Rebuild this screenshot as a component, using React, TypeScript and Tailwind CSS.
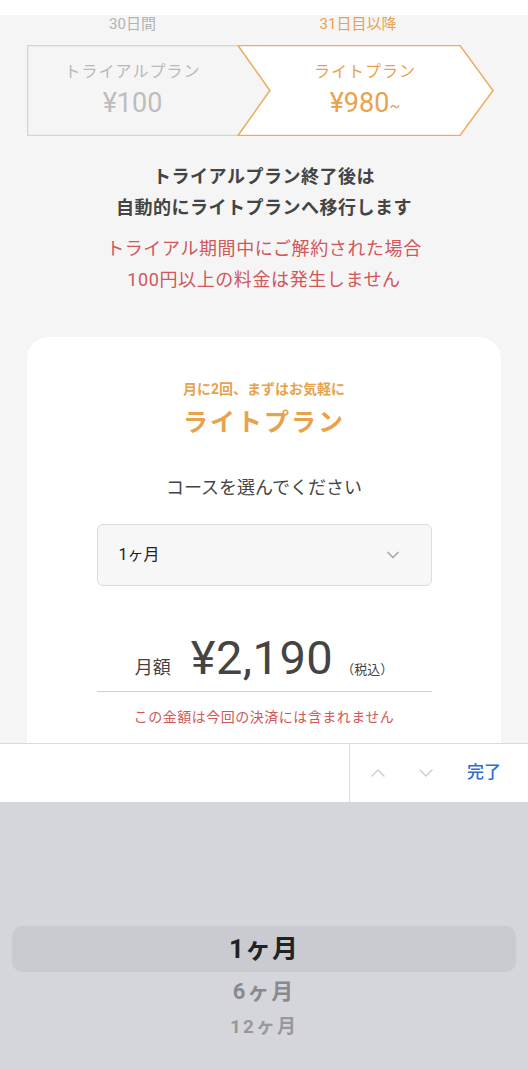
import { ChevronDown, ChevronUp } from "lucide-react";

const font = { fontFamily: '"Roboto", "Noto Sans CJK JP", sans-serif' };

export default function App() {
  return (
    <div className="w-[528px] h-[1069px] overflow-hidden bg-white flex flex-col" style={font}>
      <div className="h-[15px] bg-white shrink-0" />

      {/* page content */}
      <div className="h-[728px] bg-[#f5f5f5] overflow-hidden shrink-0 flex flex-col">
        <div className="flex h-[18px] mx-[27px] text-[15px] leading-[18px]">
          <div className="w-[211px] text-center text-[#b3b3b3]">30日間</div>
          <div className="w-[240px] text-center text-[#e9a24c]">31日目以降</div>
        </div>

        {/* plan arrows */}
        <div className="relative mx-[27px] mt-[12px] h-[91px] shrink-0 flex">
          <svg className="absolute inset-0" width="474" height="91" viewBox="0 0 474 91">
            <polygon points="0.5,0.5 211,0.5 243,45.5 211,90.5 0.5,90.5" fill="#f5f5f5" stroke="#d4d4d4" strokeWidth="1.5" />
            <polygon points="211,0.5 433,0.5 466,45.5 433,90.5 211,90.5 243,45.5" fill="#ffffff" stroke="#ecad62" strokeWidth="1.5" />
          </svg>
          <div className="relative w-[211px] flex flex-col items-center pt-[16px]">
            <div className="text-[16px] leading-[22px] text-[#b8b8b8] tracking-[1px]">トライアルプラン</div>
            <div className="mt-[5px] text-[27px] leading-[30px] text-[#bdbdbd]">¥100</div>
          </div>
          <div className="relative ml-[32px] w-[190px] flex flex-col items-center pt-[16px]">
            <div className="text-[16px] leading-[22px] text-[#e9a24c] tracking-[1px]">ライトプラン</div>
            <div className="mt-[5px] text-[27px] leading-[30px] text-[#e9a24c]">
              ¥980<span className="text-[16px]">~</span>
            </div>
          </div>
        </div>

        <div className="mt-[25px] text-center text-[18px] leading-[31px] font-bold text-[#444] tracking-[0.5px]">
          <div>トライアルプラン終了後は</div>
          <div>自動的にライトプランへ移行します</div>
        </div>
        <div className="mt-[10px] text-center text-[18px] leading-[31px] text-[#d2565a] tracking-[0.6px]">
          <div>トライアル期間中にご解約された場合</div>
          <div>100円以上の料金は発生しません</div>
        </div>

        {/* card */}
        <div className="mt-[42px] mx-[27px] h-[460px] shrink-0 bg-white rounded-[22px] flex flex-col items-center pt-[42px]">
          <div className="text-[14px] leading-[20px] font-bold text-[#e9a24c]">月に2回、まずはお気軽に</div>
          <div className="mt-[8px] text-[25px] leading-[32px] font-bold text-[#e9a24c] tracking-[2px]">ライトプラン</div>
          <div className="mt-[36px] text-[18px] leading-[26px] text-[#444]">コースを選んでください</div>
          <div className="mt-[23px] w-[335px] h-[62px] bg-[#f7f7f7] border border-[#dcdcdc] rounded-[6px] flex items-center justify-between pl-[21px] pr-[28px]">
            <span className="text-[16px] text-[#222]">1ヶ月</span>
            <ChevronDown size={20} strokeWidth={2} className="text-[#a8a8a8]" />
          </div>
          <div className="mt-[46px] w-[335px] flex items-baseline justify-center border-b border-[#cfcfcf] pb-[7px] text-[#444]">
            <span className="text-[18px] mr-[20px]">月額</span>
            <span className="text-[47px] leading-[52px] tracking-[0.5px]">¥2,190</span>
            <span className="text-[13px] ml-[8px]">（税込）</span>
          </div>
          <div className="mt-[15px] text-[14px] leading-[20px] text-[#d2565a] tracking-[0.5px]">この金額は今回の決済には含まれません</div>
        </div>
      </div>

      {/* keyboard toolbar */}
      <div className="h-[59px] shrink-0 bg-white border-t border-[#dadada] flex">
        <div className="w-[350px] border-r border-[#dadada]" />
        <div className="flex-1 flex items-center">
          <ChevronUp size={24} strokeWidth={1.5} className="ml-[16px] text-[#cfcfcf]" />
          <ChevronDown size={24} strokeWidth={1.5} className="ml-[24px] text-[#cfcfcf]" />
          <span className="ml-[29px] text-[17px] font-medium text-[#2e6cd1]">完了</span>
        </div>
      </div>

      {/* picker */}
      <div className="flex-1 bg-[#d5d6db] pt-[124px] px-[12px] flex flex-col items-center">
        <div className="w-full h-[46px] bg-[#cacbd0] rounded-[10px] flex items-center justify-center text-[26px] font-bold text-[#222] tracking-[1px]">
          1ヶ月
        </div>
        <div className="h-[40px] leading-[40px] text-[22px] font-bold text-[#8a8a8e] tracking-[2px]">6ヶ月</div>
        <div className="h-[30px] leading-[30px] text-[19px] font-bold text-[#98989c] tracking-[2px]">12ヶ月</div>
      </div>
    </div>
  );
}
